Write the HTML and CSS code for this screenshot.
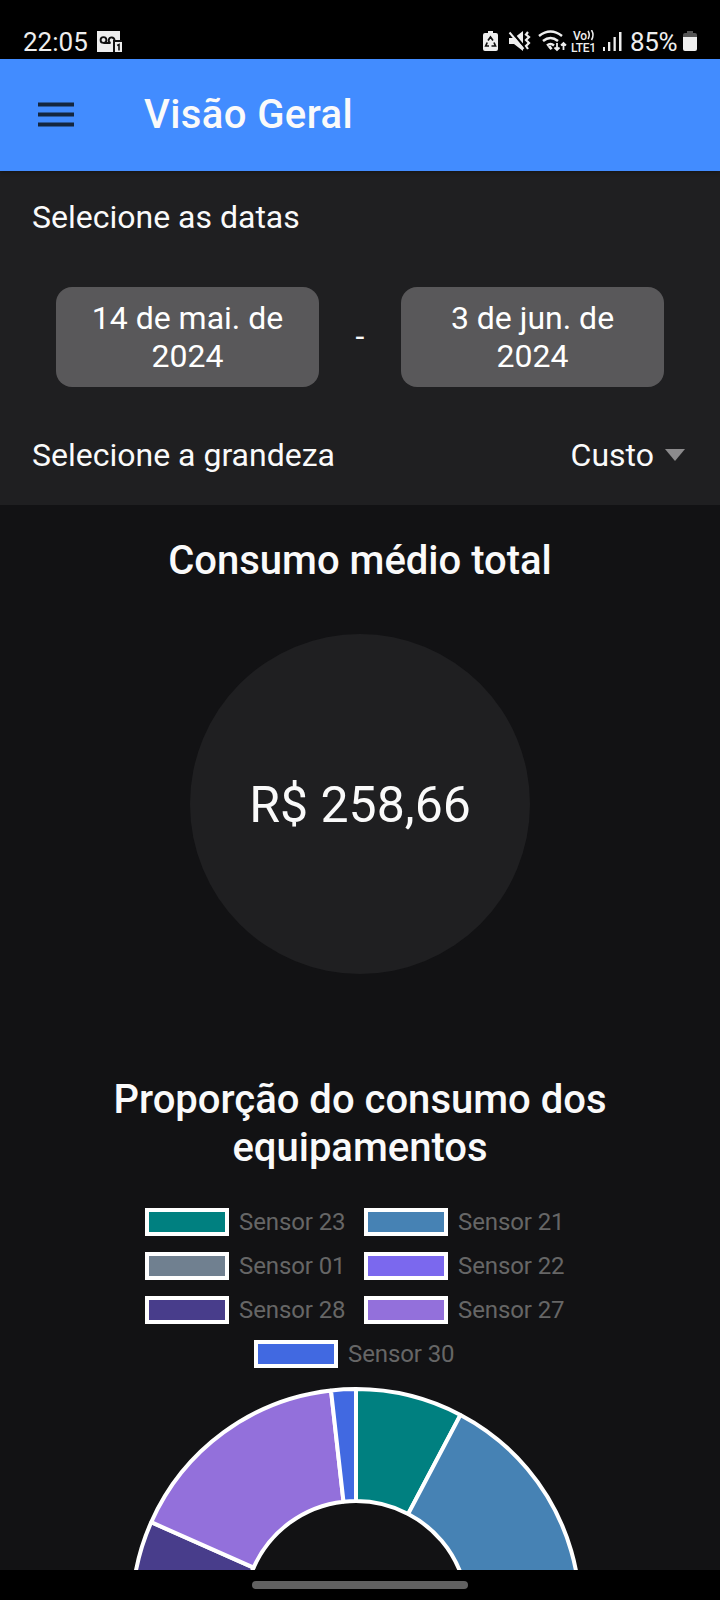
FILE: index.html
```html
<!DOCTYPE html>
<html lang="pt-BR">
<head>
<meta charset="utf-8">
<title>Visão Geral</title>
<link rel="stylesheet" href="styles.css">
</head>
<body>
<div class="screen">
  <div class="status">
    <span class="clock">22:05</span>
    <svg class="voicemail" width="27" height="23" viewBox="0 0 27 23">
      <path fill="#eee" d="M1 1h23v9h-4v2h-3v10H1z"/>
      <g fill="none" stroke="#111" stroke-width="1.9"><circle cx="7.5" cy="10" r="2.900"/><path d="M7.500 13H14.500A2.900 2.900 0 1 1 18.500 10"/></g>
      <path fill="#111" d="M17 10h9v12h-9z"/>
      <path fill="#eee" d="M19 12h7v10h-7z"/>
      <path d="M21.200 15.500l1.800-1v6" fill="none" stroke="#111" stroke-width="1.600"/>
    </svg>
    <svg class="indicators" width="144" height="24" viewBox="0 0 144 24">
      <path fill="#eee" d="M6 1h5v2h3q2 0 2 2v14q0 2-2 2H3q-2 0-2-2V5q0-2 2-2h3z"/>
      <g fill="none" stroke="#111" stroke-width="1.700"><path d="M6 10.500L8.500 7L11 10.500M12 12.500L13.500 16H9.500M7 16H3.700L5.200 12.500"/></g>
      <path fill="#eee" d="M27 8h5l9-7v20l-9-7h-5z"/>
      <path d="M29.500 1.500l14 17" stroke="#000" stroke-width="2.500"/><path d="M27.500 2.500l14 16.500" stroke="#eee" stroke-width="2"/>
      <path d="M46 2l-2 2.500l3 2.500l-3 3l3 3l-3 3l2 3" fill="none" stroke="#eee" stroke-width="2.200"/>
      <g fill="none" stroke="#eee" stroke-width="2.500"><path d="M57 6q11.500-9 23 0M61 11q7.500-6 15 0M65 15.500q3.500-3 7 0"/></g>
      <path fill="#eee" d="M65.500 16.500l3 3.500l2-1.500l-2-3z"/>
      <path fill="none" stroke="#eee" stroke-width="1.800" d="M75 13v7M72.500 17.500L75 20l2.500-2.500M81.500 20v-7M79 15.500l2.500-2.500l2.500 2.500"/>
      <text class="net" x="91" y="9.500" textLength="14">Vo</text>
      <path fill="none" stroke="#eee" stroke-width="1.500" d="M106 1q2.500 4 0 8M109.500 0q3 5 0 10"/>
      <text class="net" x="89" y="21.500" textLength="25">LTE1</text>
      <path fill="#eee" d="M121 17h2v4h-2zM126 12h2.300v9H126zM131.500 7h2.300v14h-2.300zM137 2h2.500v19H137z"/>
    </svg>
    <span class="percent">85%</span>
    <svg class="battery" width="16" height="22" viewBox="0 0 16 22">
      <path fill="#555" d="M5 1h6v2h2q2 0 2 2v3H1V5q0-2 2-2h2z"/>
      <path fill="#eee" d="M1 7h14v12q0 2-2 2H3q-2 0-2-2z"/>
    </svg>
  </div>

  <header class="toolbar">
    <svg class="menu" width="36" height="26" viewBox="0 0 36 26"><path d="M0 2.500h36M0 12.500h36M0 22.500h36" stroke="#14263f" stroke-width="4"/></svg>
    <h1>Visão Geral</h1>
  </header>

  <section class="filters">
    <div class="label">Selecione as datas</div>
    <div class="dates">
      <button class="date">14 de mai. de<br>2024</button>
      <span class="dash">-</span>
      <button class="date">3 de jun. de<br>2024</button>
    </div>
    <div class="quantity">
      <span>Selecione a grandeza</span>
      <span class="select">Custo <i class="caret"></i></span>
    </div>
  </section>

  <main class="content">
    <h2 class="average">Consumo médio total</h2>
    <div class="total"><span>R$ 258,66</span></div>
    <h2 class="ratio">Proporção do consumo dos<br>equipamentos</h2>
    <div class="legend">
      <div class="entry"><i class="swatch teal"></i>Sensor 23</div>
      <div class="entry"><i class="swatch steel"></i>Sensor 21</div>
      <div class="entry"><i class="swatch slate"></i>Sensor 01</div>
      <div class="entry"><i class="swatch violet"></i>Sensor 22</div>
      <div class="entry"><i class="swatch indigo"></i>Sensor 28</div>
      <div class="entry"><i class="swatch purple"></i>Sensor 27</div>
      <div class="entry last"><i class="swatch royal"></i>Sensor 30</div>
    </div>
    <svg class="donut" width="452" height="452" viewBox="-226 -226 452 452">
      <g stroke="#fff" stroke-width="4" stroke-linejoin="bevel">
        <path fill="#008080" d="M0-224A224 224 0 0 1 104.500-198.100L52.200-99.100A112 112 0 0 0 0-112z"/>
        <path fill="#4682b4" d="M104.500-198.100A224 224 0 0 1 194 112L97 56A112 112 0 0 0 52.200-99.100z"/>
        <path fill="#483d8b" d="M-194 112A224 224 0 0 1-204.800-90.800L-102.400-45.400A112 112 0 0 0-97 56z"/>
        <path fill="#9370db" d="M-204.800-90.800A224 224 0 0 1-25-222.600L-12.500-111.300A112 112 0 0 0-102.400-45.400z"/>
        <path fill="#4169e1" d="M-25-222.600A224 224 0 0 1 0-224V-112A112 112 0 0 0-12.500-111.300z"/>
      </g>
    </svg>
  </main>
  <div class="navbar"><div class="handle"></div></div>
</div>
</body>
</html>
```
FILE: styles.css
```css
* { box-sizing: border-box; }
body { margin: 0; background: #000; }
.screen {
  width: 720px; height: 1600px; overflow: hidden;
  display: flex; flex-direction: column;
  font-family: Roboto, sans-serif; font-size: 32px; color: #fafafa;
}
.status {
  height: 59px; flex: none; background: #000; display: flex; align-items: flex-start;
  padding: 30px 22px 0 23px; color: #eee; font-size: 26px; line-height: 24px;
}
.clock { width: 73px; }
.indicators { margin-left: auto; margin-right: 4px; }
.percent { width: 52px; font-size: 26px; letter-spacing: -0.3px; white-space: nowrap; }
.net { font: 500 12px Roboto, sans-serif; fill: #eee; }
.toolbar {
  height: 112px; flex: none; background: #428cff; display: flex; align-items: center;
  padding-left: 38px; position: relative; box-shadow: 0 1px 4px #0006;
}
.menu { margin-top: 0; }
h1 { margin: 0 0 0 70px; font-size: 40px; font-weight: 500; line-height: 48px; letter-spacing: 0.4px; }
.filters { height: 334px; flex: none; background: #1f1f21; padding: 26px 32px 0; }
.label { height: 40px; line-height: 40px; }
.dates { margin: 50px 24px 0; display: flex; justify-content: space-between; align-items: center; }
.date {
  width: 263px; height: 100px; border: 0; border-radius: 16px; padding: 0 0 1px;
  background: #59585a; color: #fff; font: 32px/38px Roboto, sans-serif;
}
.dash { line-height: 38px; padding-bottom: 3px; }
.quantity { margin-top: 48px; display: flex; justify-content: space-between; line-height: 40px; }
.select { display: flex; align-items: center; gap: 11px; padding-right: 3px; }
.caret { border: 10px solid transparent; border-top: 12px solid #8c8b8d; border-bottom: 0; }
.content { flex: 1; min-height: 0; overflow: hidden; background: #121214; display: flex; flex-direction: column; align-items: center; }
h2 { margin: 0; font-size: 40px; font-weight: 500; line-height: 48px; text-align: center; flex: none; }
.average { margin-top: 32px; }
.total {
  width: 340px; height: 340px; border-radius: 50%; background: #1f1f21; flex: none;
  margin-top: 49px; padding-top: 2px; display: flex; align-items: center; justify-content: center; font-size: 50px;
}
.ratio { margin-top: 102px; }
.legend {
  margin: 36px 10px 0 0; width: 420px; flex: none; font-size: 24px; line-height: 28px; color: #666;
  display: grid; grid-template-columns: 219px 201px; row-gap: 16px;
}
.entry { display: flex; gap: 10px; white-space: nowrap; letter-spacing: -0.1px; }
.swatch { flex: none; width: 84px; height: 28px; border: 4px solid #fff; }
.last { grid-column: 1 / 3; margin-left: 109px; }
.teal { background: #008080; }
.steel { background: #4682b4; }
.slate { background: #708090; }
.violet { background: #7b68ee; }
.indigo { background: #483d8b; }
.purple { background: #9370db; }
.royal { background: #4169e1; }
.donut { flex: none; margin: 19px 8px 0 0; }
.navbar { height: 30px; flex: none; background: #000; display: flex; justify-content: center; padding-top: 11px; }
.handle { width: 216px; height: 8px; border-radius: 4px; background: #616161; }
```
